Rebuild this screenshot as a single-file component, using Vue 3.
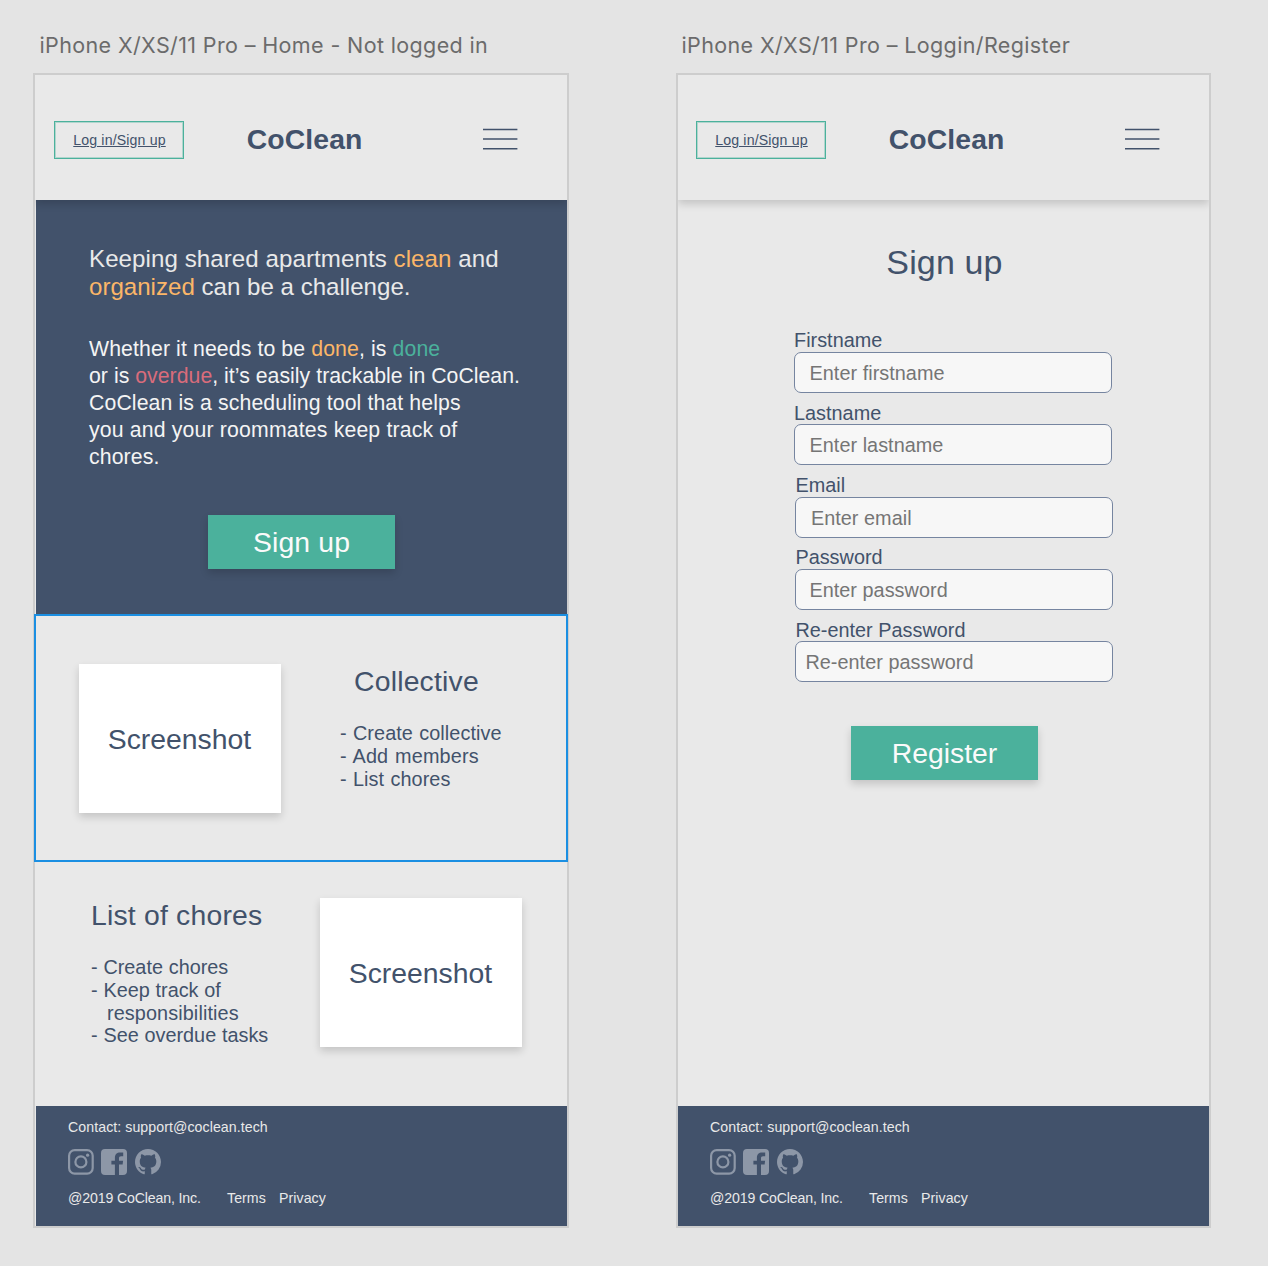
<script setup>
import { h } from 'vue'

const fields = [
  { label: 'Firstname', placeholder: 'Enter firstname', shift: 0, pad: 14.5 },
  { label: 'Lastname', placeholder: 'Enter lastname', shift: 0, pad: 14.5 },
  { label: 'Email', placeholder: 'Enter email', shift: 1.4, pad: 14.5 },
  { label: 'Password', placeholder: 'Enter password', shift: 1.4, pad: 13 },
  { label: 'Re-enter Password', placeholder: 'Re-enter password', shift: 1.4, pad: 9 },
]

const SiteHeader = () =>
  h('header', { class: 'site-header' }, [
    h('a', { class: 'login' }, 'Log in/Sign up'),
    h('div', { class: 'brand' }, 'CoClean'),
    h('svg', { class: 'burger', viewBox: '0 0 35 22' }, [
      h('path', { d: 'M0 1.4H34.4M0 11H34.4M0 20.7H34.4', stroke: '#42526b', 'stroke-width': 1.5 }),
    ]),
  ])

const SiteFooter = () =>
  h('footer', { class: 'site-footer' }, [
    h('div', { class: 'line' }, 'Contact: support@coclean.tech'),
    h('div', { class: 'social' }, [
      h('svg', { viewBox: '0 0 26 26', fill: 'none', stroke: 'currentColor' }, [
        h('rect', { x: 1.1, y: 1.1, width: 23.6, height: 23.6, rx: 5.6, 'stroke-width': 2.2 }),
        h('circle', { cx: 12.9, cy: 12.9, r: 5.5, 'stroke-width': 2.2 }),
        h('circle', { cx: 19.6, cy: 6.2, r: 1.6, fill: 'currentColor', stroke: 'none' }),
      ]),
      h('svg', { viewBox: '0 0 26 26', fill: 'currentColor' }, [
        h('path', {
          d: 'M4 0H22Q26 0 26 4V22Q26 26 22 26H18V15.6H21.6L22.1 11.8H18V9.3C18 8 18.5 7.2 20.1 7.2H22.2V3.6C21.7 3.5 20.4 3.4 19 3.4C16 3.4 13.9 5.2 13.9 8.7V11.8H10.4V15.6H13.9V26H4Q0 26 0 22V4Q0 0 4 0Z',
        }),
      ]),
      h('svg', { viewBox: '0 0 16 16', fill: 'currentColor' }, [
        h('path', {
          d: 'M8 0C3.58 0 0 3.58 0 8c0 3.54 2.29 6.53 5.47 7.59.4.07.55-.17.55-.38 0-.19-.01-.82-.01-1.49-2.01.37-2.53-.49-2.69-.94-.09-.23-.48-.94-.82-1.13-.28-.15-.68-.52-.01-.53.63-.01 1.08.58 1.23.82.72 1.21 1.87.87 2.33.66.07-.52.28-.87.51-1.07-1.78-.2-3.64-.89-3.64-3.95 0-.87.31-1.59.82-2.15-.08-.2-.36-1.02.08-2.12 0 0 .67-.21 2.2.82.64-.18 1.32-.27 2-.27s1.36.09 2 .27c1.53-1.04 2.2-.82 2.2-.82.44 1.1.16 1.92.08 2.12.51.56.82 1.27.82 2.15 0 3.07-1.87 3.75-3.65 3.95.29.25.54.73.54 1.48 0 1.07-.01 1.93-.01 2.2 0 .21.15.46.55.38A8.01 8.01 0 0 0 16 8c0-4.42-3.58-8-8-8z',
        }),
      ]),
    ]),
    h('div', { class: 'line legal' }, [
      h('span', { class: 'copy' }, '@2019 CoClean, Inc.'),
      h('a', { class: 'terms' }, 'Terms'),
      h('a', 'Privacy'),
    ]),
  ])
</script>

<template>
  <main class="canvas">
    <section class="frame">
      <h2 class="frame-name">iPhone X/XS/11 Pro – Home - Not logged in</h2>
      <div class="artboard home">
        <SiteHeader />
        <div class="hero">
          <p class="lead">Keeping shared apartments <span class="todo">clean</span> and<br /><span class="second"><span class="todo">organized</span> can be a challenge.</span></p>
          <p class="about">Whether it needs to be <span class="todo">done</span>, is <span class="ok">done</span><br /><span class="tight">or is <span class="late">overdue</span>, it’s easily trackable in CoClean.</span><br />CoClean is a scheduling tool that helps<br /><span class="loose">you and your roommates keep track of</span><br />chores.</p>
          <button class="cta">Sign up</button>
        </div>
        <div class="feature collective">
          <div class="shot">Screenshot</div>
          <div class="copy-block">
            <h3>Collective</h3>
            <ul>
              <li>- Create collective</li>
              <li class="members">- Add members</li>
              <li>- List chores</li>
            </ul>
          </div>
          <div class="selection"></div>
        </div>
        <div class="feature chores">
          <div class="copy-block">
            <h3>List of chores</h3>
            <ul>
              <li>- Create chores</li>
              <li>- Keep track of</li>
              <li class="indent">responsibilities</li>
              <li>- See overdue tasks</li>
            </ul>
          </div>
          <div class="shot">Screenshot</div>
        </div>
        <SiteFooter />
      </div>
    </section>

    <section class="frame">
      <h2 class="frame-name">iPhone X/XS/11 Pro – Loggin/Register</h2>
      <div class="artboard">
        <SiteHeader />
        <form class="signup" @submit.prevent>
          <h1>Sign up</h1>
          <label v-for="f in fields" :key="f.label" class="field" :style="{ marginLeft: f.shift + 'px' }">
            <span>{{ f.label }}</span>
            <input :placeholder="f.placeholder" :style="{ paddingLeft: f.pad + 'px' }" />
          </label>
          <button class="cta register">Register</button>
        </form>
        <SiteFooter />
      </div>
    </section>
  </main>
</template>

<style>
body {
  margin: 0;
  background: #e4e4e4;
}
</style>

<style scoped>
.canvas {
  display: flex;
  gap: 107px;
  width: 1268px;
  height: 1266px;
  padding: 31px 0 0 34px;
  box-sizing: border-box;
  overflow: hidden;
  background: #e4e4e4;
  font-family: "Liberation Sans", Arial, sans-serif;
  letter-spacing: 0.14px;
  color: #42526b;
}
h1, h2, h3, p, ul {
  margin: 0;
  padding: 0;
  font-weight: 400;
}
.frame {
  width: 535px;
  flex: none;
}
.frame-name {
  height: 28px;
  margin: 0 0 14px 5.5px;
  font: 400 21.5px/28px Inter, sans-serif;
  letter-spacing: 0.37px;
  white-space: nowrap;
  color: #6b6b6b;
}
.artboard {
  display: flex;
  flex-direction: column;
  width: 531px;
  height: 1151px;
  border: 2px solid #cdcdcd;
  background: #e9e9e9;
}
.home {
  width: 532px;
  margin-left: -1px;
}
.home :deep(.site-header) {
  padding-left: 19px;
}
.home .hero,
.home :deep(.site-footer) {
  margin-left: 1px;
}
:deep(.site-header) {
  position: relative;
  z-index: 1;
  flex: none;
  display: flex;
  align-items: center;
  height: 125px;
  padding: 0 49px 0 18px;
  box-sizing: border-box;
  background: #e9e9e9;
  box-shadow: 0 4px 8px rgba(0, 0, 0, 0.16);
  clip-path: inset(0 0 -20px 0);
}
:deep(.login) {
  width: 130px;
  height: 38px;
  margin-top: 5px;
  padding-left: 1px;
  box-sizing: border-box;
  border: 1px solid #4bb19c;
  box-shadow: inset 0 0 0 1px rgba(75, 177, 156, 0.35);
  font-size: 14.17px;
  line-height: 36px;
  text-align: center;
  text-decoration: underline;
}
:deep(.brand) {
  margin: 3px 0 0 62.8px;
  font-size: 28.35px;
  font-weight: 700;
  line-height: 34px;
  letter-spacing: 0.1px;
}
:deep(.burger) {
  width: 35px;
  height: 22px;
  margin: 3px 0 0 auto;
}
.hero {
  flex: none;
  height: 414px;
  padding: 45px 0 0 53px;
  box-sizing: border-box;
  background: #42526b;
  color: #f4f4f4;
  white-space: nowrap;
}
.lead {
  font-size: 24.1px;
  line-height: 28px;
  letter-spacing: 0.07px;
  color: #e9e9e9;
}
.second { letter-spacing: 0; }
.about {
  margin-top: 34.5px;
  font-size: 21.26px;
  line-height: 27px;
  letter-spacing: 0.11px;
}
.tight { letter-spacing: 0.03px; }
.loose { letter-spacing: 0.16px; }
.todo { color: #fbb668; }
.ok { color: #4bb19c; }
.late { color: #d96c7b; }
.cta {
  display: block;
  width: 187px;
  height: 54px;
  margin: 44.5px 0 0 119px;
  padding: 0;
  border: 0;
  background: #4bb19c;
  box-shadow: 0 4px 8px rgba(0, 0, 0, 0.16);
  font: 28.35px/54px "Liberation Sans", Arial, sans-serif;
  letter-spacing: 0.15px;
  color: #fafafa;
}
.feature {
  position: relative;
  flex: none;
  display: flex;
  align-items: flex-start;
  box-sizing: border-box;
}
.collective {
  height: 247px;
  padding: 49.5px 0 0 44px;
}
.chores {
  height: 245px;
  padding: 36.5px 0 0 56px;
}
.selection {
  position: absolute;
  inset: 0 -1px -1px -1px;
  border: 2px solid #1b8fe2;
}
.shot {
  width: 202px;
  height: 149px;
  padding: 1px 1px 0 0;
  box-sizing: border-box;
  background: #fff;
  box-shadow: 0 4px 8px rgba(0, 0, 0, 0.16);
  font-size: 28.35px;
  line-height: 149px;
  letter-spacing: 0;
  text-align: center;
}
.copy-block {
  white-space: nowrap;
}
.collective .copy-block {
  margin-left: 59px;
}
.collective h3 {
  margin-left: 14px;
}
.chores .copy-block {
  width: 229px;
}
h3 {
  font-size: 28.35px;
  line-height: 34px;
  letter-spacing: 0.2px;
}
ul {
  margin-top: 24.6px;
  list-style: none;
  font-size: 19.84px;
  line-height: 22.8px;
  letter-spacing: 0.08px;
  word-spacing: 0.7px;
}
.members {
  letter-spacing: 0.15px;
  word-spacing: 1.2px;
}
.chores ul {
  letter-spacing: 0;
  word-spacing: 0.3px;
}
.chores .indent {
  padding-left: 16px;
  letter-spacing: 0.1px;
}
:deep(.site-footer) {
  flex: none;
  height: 120px;
  margin-top: auto;
  padding: 13px 0 0 32px;
  box-sizing: border-box;
  background: #42526b;
  color: #e9e9e9;
  font-size: 14.17px;
  line-height: 16px;
  letter-spacing: 0.07px;
}
:deep(.social) {
  display: flex;
  gap: 7.3px;
  margin: 14px 0 15px;
  color: #8d97a7;
}
:deep(.social svg) {
  width: 26px;
  height: 26px;
}
:deep(.legal) {
  display: flex;
}
:deep(.copy) {
  width: 159px;
  letter-spacing: -0.15px;
}
:deep(.terms) {
  width: 52px;
}
.signup {
  padding: 42px 0 0 116px;
}
.signup h1 {
  width: 301px;
  margin-bottom: 48.3px;
  font-size: 34px;
  line-height: 40px;
  letter-spacing: 0.15px;
  text-align: center;
}
.field {
  display: block;
  height: 72.35px;
  font-size: 19.84px;
  line-height: 20px;
  letter-spacing: 0.02px;
}
.field span {
  display: block;
  margin-bottom: 1.7px;
}
.field input {
  display: block;
  width: 318px;
  height: 41px;
  box-sizing: border-box;
  padding: 2px 0 0;
  border: 1px solid #7685a0;
  border-radius: 7px;
  background: #f7f7f7;
  font: inherit;
  letter-spacing: 0.04px;
}
.field input::placeholder {
  color: #757575;
  opacity: 1;
}
.register {
  margin: 34px 0 0 57px;
  letter-spacing: 0;
}
</style>
